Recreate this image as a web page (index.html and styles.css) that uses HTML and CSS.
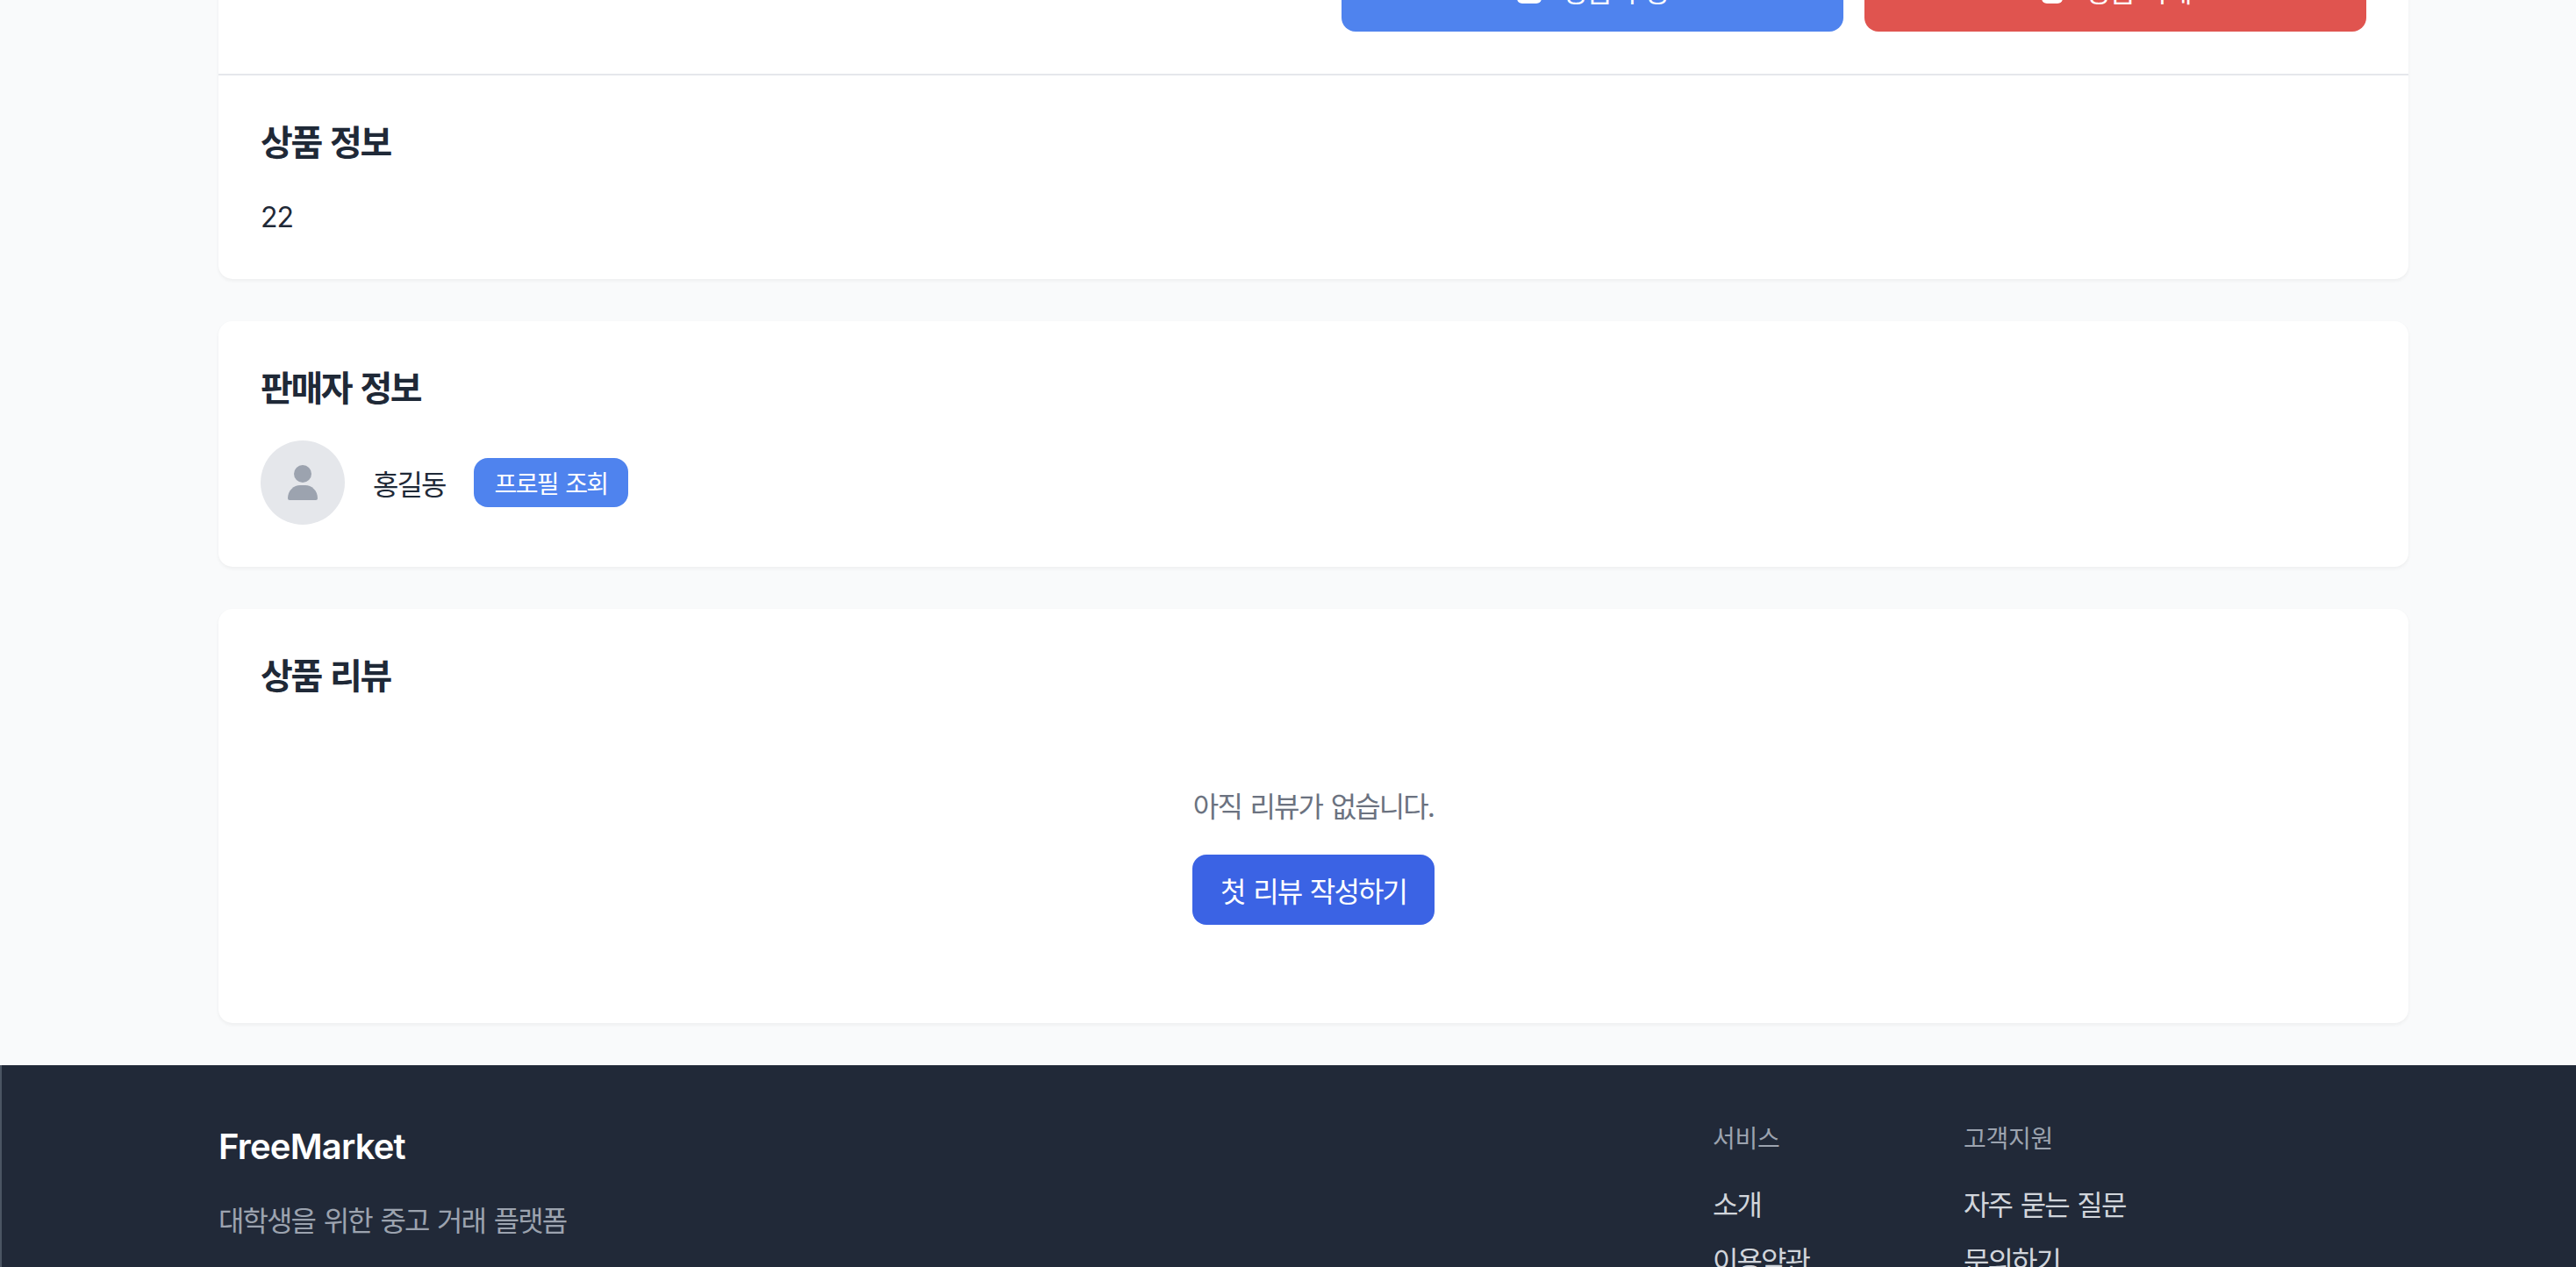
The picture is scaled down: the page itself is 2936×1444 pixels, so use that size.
FILE: index.html

```html
<!DOCTYPE html>
<html lang="ko">
<head>
  <meta charset="UTF-8" />
  <meta name="viewport" content="width=device-width, initial-scale=1.0" />
  <title>FreeMarket - 상품 상세</title>
  <link rel="stylesheet" href="styles.css">
</head>
<body>
  <main class="container">
    <section class="card product-card">
      <div class="product-actions">
        <button class="btn-action btn-edit">
          <svg class="btn-icon" viewBox="0 0 28 32"><rect width="28" height="32" rx="6" fill="#fff"/></svg>
          상품 수정
        </button>
        <button class="btn-action btn-delete">
          <svg class="btn-icon" viewBox="0 0 28 32"><path d="M2 0h24v26a6 6 0 0 1-6 6H8a6 6 0 0 1-6-6z" fill="#fff"/></svg>
          상품 삭제
        </button>
      </div>
      <div class="product-info">
        <h2>상품 정보</h2>
        <p>22</p>
      </div>
    </section>

    <section class="card">
      <h2>판매자 정보</h2>
      <div class="seller">
        <div class="avatar">
          <svg viewBox="0 0 36 40" width="36" height="40">
            <circle cx="18" cy="10" r="10" fill="#9ca3af"/>
            <path d="M1 38C1 29 8 23 15 23h6c7 0 14 6 14 15q0 2-2 2H3q-2 0-2-2z" fill="#9ca3af"/>
          </svg>
        </div>
        <span class="seller-name">홍길동</span>
        <a class="btn-profile" href="#">프로필 조회</a>
      </div>
    </section>

    <section class="card">
      <h2>상품 리뷰</h2>
      <div class="reviews-empty">
        <p>아직 리뷰가 없습니다.</p>
        <button class="btn-review">첫 리뷰 작성하기</button>
      </div>
    </section>
  </main>

  <footer>
    <div class="footer-inner">
      <div class="footer-brand">
        <h3>FreeMarket</h3>
        <p>대학생을 위한 중고 거래 플랫폼</p>
      </div>
      <div class="footer-col">
        <h4>서비스</h4>
        <ul>
          <li><a href="#">소개</a></li>
          <li><a href="#">이용약관</a></li>
        </ul>
      </div>
      <div class="footer-col">
        <h4>고객지원</h4>
        <ul>
          <li><a href="#">자주 묻는 질문</a></li>
          <li><a href="#">문의하기</a></li>
        </ul>
      </div>
    </div>
  </footer>
</body>
</html>
```

FILE: styles.css

```css
* { box-sizing: border-box; margin: 0; padding: 0; letter-spacing: -0.06em; word-spacing: 0.08em; }
html, body { height: 1444px; overflow: hidden; }
body {
  font-family: Inter, "Noto Sans CJK KR", sans-serif;
  background-color: #f9fafb;
  color: #1f2937;
}
button { font-family: inherit; border: none; cursor: pointer; color: #fff; }
a { text-decoration: none; color: inherit; }
ul { list-style: none; }

.container {
  width: 2496px;
  margin-left: 249px;
  display: flex;
  flex-direction: column;
  gap: 48px;
}
.card {
  background-color: #fff;
  border-radius: 16px;
  padding: 48px;
  box-shadow: 0 2px 4px rgba(0, 0, 0, 0.05);
}
.card h2 {
  font-size: 40px;
  line-height: 56px;
  font-weight: 700;
  padding-top: 1px;
  margin-bottom: 31px;
}

/* page is scrolled, top of this card sits above the window */
.product-card { margin-top: -108px; padding: 48px 0 0; }
.product-actions {
  display: flex;
  justify-content: flex-end;
  gap: 24px;
  padding: 0 48px 48px;
}
.btn-action {
  width: 572px;
  height: 96px;
  border-radius: 16px;
  font-size: 32px;
  display: flex;
  align-items: center;
  justify-content: center;
  gap: 24px;
}
.btn-icon { width: 28px; height: 32px; }
.btn-edit { background-color: #4f83ee; }
.btn-delete { background-color: #e0544f; }
.product-info { border-top: 2px solid #e5e7eb; padding: 48px; }
.product-info p {
  font-size: 32px;
  line-height: 48px;
  letter-spacing: -0.03em;
  padding-top: 2px;
  margin-bottom: -2px;
}

.seller { display: flex; align-items: center; gap: 32px; }
.avatar {
  width: 96px;
  height: 96px;
  border-radius: 50%;
  background-color: #e5e7eb;
  display: flex;
  align-items: center;
  justify-content: center;
}
.seller-name { font-size: 32px; }
.btn-profile {
  height: 56px;
  padding: 0 24px;
  border-radius: 16px;
  background-color: #4f83ee;
  color: #fff;
  font-size: 28px;
  display: flex;
  align-items: center;
}

.reviews-empty {
  display: flex;
  flex-direction: column;
  align-items: center;
  gap: 30px;
  padding: 64px 0 64px;
}
.reviews-empty p { font-size: 32px; line-height: 48px; color: #6b7280; padding-top: 2px; }
.btn-review {
  height: 80px;
  padding: 0 32px;
  border-radius: 16px;
  background-color: #3b63e4;
  font-size: 32px;
}

footer {
  background-color: #212938;
  border-left: 2px solid #4b5563;
  padding: 64px 0 0 247px;
  margin-top: 48px;
  color: #9ca3af;
}
.footer-inner {
  display: grid;
  grid-template-columns: 1703px 286px 1fr;
}
.footer-brand h3 {
  font-size: 40px;
  line-height: 56px;
  font-weight: 600;
  letter-spacing: -0.02em;
  color: #fff;
  padding-top: 1px;
  margin-bottom: 31px;
}
.footer-brand p { font-size: 32px; line-height: 48px; padding-top: 2px; }
.footer-col h4 {
  font-size: 28px;
  line-height: 40px;
  font-weight: 400;
  letter-spacing: -0.01em;
  margin-bottom: 32px;
}
.footer-col li {
  font-size: 32px;
  line-height: 48px;
  margin-bottom: 16px;
  color: #d1d5db;
}
```
